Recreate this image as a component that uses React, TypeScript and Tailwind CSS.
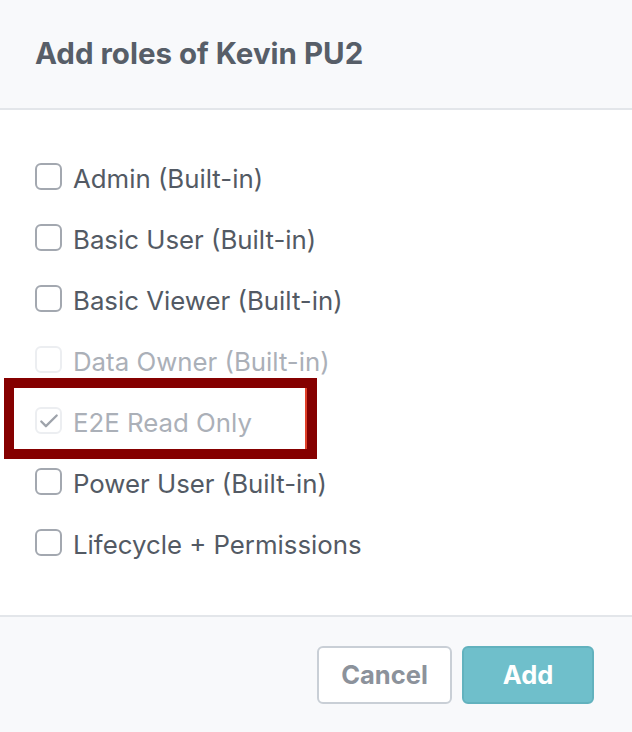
import React from 'react';

type Role = { label: string; disabled?: boolean; checked?: boolean };

const roles: Role[] = [
    { label: 'Admin (Built-in)' },
    { label: 'Basic User (Built-in)' },
    { label: 'Basic Viewer (Built-in)' },
    { label: 'Data Owner (Built-in)', disabled: true },
    { label: 'E2E Read Only', disabled: true, checked: true },
    { label: 'Power User (Built-in)' },
    { label: 'Lifecycle + Permissions' },
];

const RoleRow: React.FC<{ role: Role }> = ({ role }) => (
    <label className="h-[61px] flex items-center gap-[11px]">
        <span
            className={`w-[27px] h-[27px] shrink-0 rounded-[6px] border-2 flex items-center justify-center bg-white ${
                role.disabled ? 'border-[#eceef1]' : 'border-[#a3a8b0]'
            }`}
        >
            {role.checked && (
                <svg viewBox="0 0 20 20" className="w-[22px] h-[22px]" fill="none" stroke="#9ea3ab" strokeWidth={2.1} strokeLinecap="round" strokeLinejoin="round">
                    <path d="M3 10.5l4.2 4.2L17 5" />
                </svg>
            )}
        </span>
        <span className={`text-[25.8px] leading-none pt-[5px] ${role.disabled ? 'text-[#abb0b8]' : 'text-[#535a64]'}`}>{role.label}</span>
    </label>
);

export default function App() {
    return (
        <div className="w-[632px] h-[732px] bg-white flex flex-col font-['Inter',sans-serif] relative">
            <div className="h-[110px] bg-[#f8f9fb] border-b-2 border-[#e3e6ea] flex items-center px-[35px] pb-[2px]">
                <h2 className="text-[29.5px] font-bold text-[#575e68]">Add roles of Kevin PU2</h2>
            </div>

            <div className="flex-1 px-[35px] pt-[36px]">
                {roles.map(r => (
                    <RoleRow key={r.label} role={r} />
                ))}
            </div>

            <div className="h-[117px] bg-[#f8f9fb] border-t-2 border-[#e3e6ea] flex justify-end items-start gap-[10px] pt-[29px] pr-[38px]">
                <button className="w-[135px] h-[58px] rounded-[6px] border-2 border-[#c9cfd6] bg-white text-[25.5px] font-bold text-[#8c929b]">
                    Cancel
                </button>
                <button className="w-[132px] h-[58px] rounded-[6px] border-2 border-[#62b2be] bg-[#6fbfcb] text-[25.5px] font-bold text-white">
                    Add
                </button>
            </div>

            {/* annotation box */}
            <div className="absolute left-[4px] top-[378px] w-[313px] h-[81px] border-[10px] border-[#850000]">
                <div className="absolute right-0 top-0 bottom-0 w-[2px] bg-[#e0412a]" />
            </div>
        </div>
    );
}
